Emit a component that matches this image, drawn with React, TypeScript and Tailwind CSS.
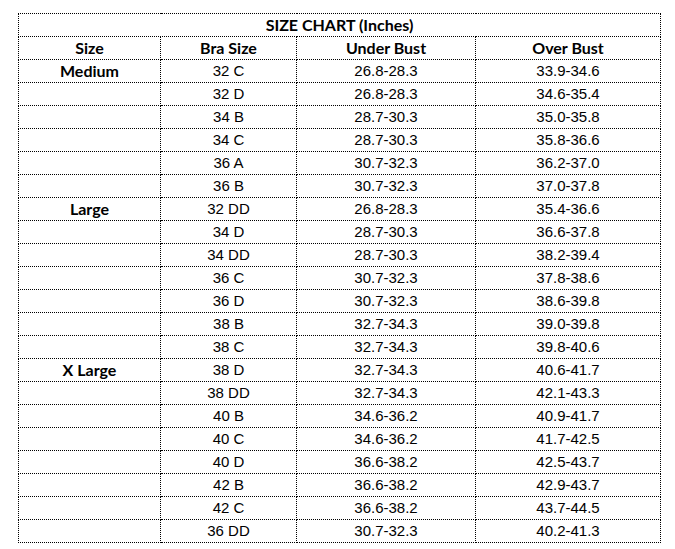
const rows: [string, string, string, string][] = [
  ["Medium", "32 C", "26.8-28.3", "33.9-34.6"],
  ["", "32 D", "26.8-28.3", "34.6-35.4"],
  ["", "34 B", "28.7-30.3", "35.0-35.8"],
  ["", "34 C", "28.7-30.3", "35.8-36.6"],
  ["", "36 A", "30.7-32.3", "36.2-37.0"],
  ["", "36 B", "30.7-32.3", "37.0-37.8"],
  ["Large", "32 DD", "26.8-28.3", "35.4-36.6"],
  ["", "34 D", "28.7-30.3", "36.6-37.8"],
  ["", "34 DD", "28.7-30.3", "38.2-39.4"],
  ["", "36 C", "30.7-32.3", "37.8-38.6"],
  ["", "36 D", "30.7-32.3", "38.6-39.8"],
  ["", "38 B", "32.7-34.3", "39.0-39.8"],
  ["", "38 C", "32.7-34.3", "39.8-40.6"],
  ["X Large", "38 D", "32.7-34.3", "40.6-41.7"],
  ["", "38 DD", "32.7-34.3", "42.1-43.3"],
  ["", "40 B", "34.6-36.2", "40.9-41.7"],
  ["", "40 C", "34.6-36.2", "41.7-42.5"],
  ["", "40 D", "36.6-38.2", "42.5-43.7"],
  ["", "42 B", "36.6-38.2", "42.9-43.7"],
  ["", "42 C", "36.6-38.2", "43.7-44.5"],
  ["", "36 DD", "30.7-32.3", "40.2-41.3"],
];

const cell = "border border-dotted border-black h-[23px] p-0 text-center align-middle leading-[22px]";
const bold = "font-['Lato',sans-serif] font-bold text-[16px]";

export default function App() {
  return (
    <div className="min-h-[549px] w-[675px] bg-white pl-[18px] pt-[13px] font-['Liberation_Sans',Arial,sans-serif] text-[15px] text-black">
      <table className="border-collapse table-fixed w-[642px]">
        <colgroup>
          <col className="w-[142px]" />
          <col className="w-[136px]" />
          <col className="w-[179px]" />
          <col className="w-[185px]" />
        </colgroup>
        <thead>
          <tr>
            <th colSpan={4} className={`${cell} ${bold}`}>
              SIZE CHART (Inches)
            </th>
          </tr>
          <tr>
            <th className={`${cell} ${bold}`}>Size</th>
            <th className={`${cell} ${bold}`}>Bra Size</th>
            <th className={`${cell} ${bold}`}>Under Bust</th>
            <th className={`${cell} ${bold}`}>Over Bust</th>
          </tr>
        </thead>
        <tbody>
          {rows.map(([size, bra, under, over], i) => (
            <tr key={i}>
              <td className={`${cell} ${bold}`}>{size}</td>
              <td className={cell}>{bra}</td>
              <td className={cell}>{under}</td>
              <td className={cell}>{over}</td>
            </tr>
          ))}
        </tbody>
      </table>
    </div>
  );
}
